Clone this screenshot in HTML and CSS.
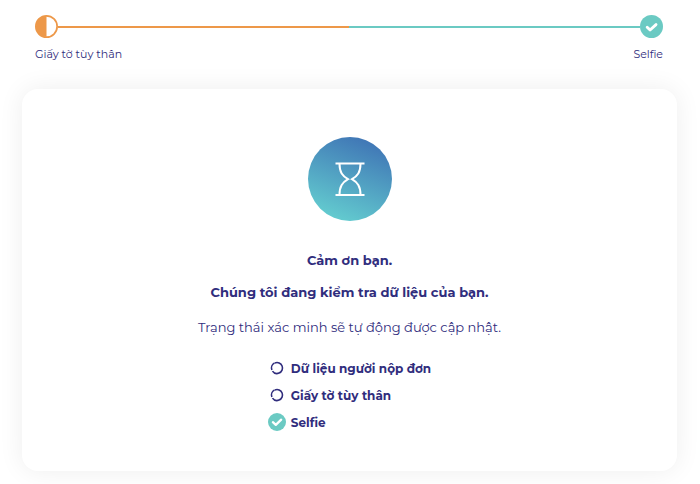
FILE: index.html
```html
<!DOCTYPE html>
<html lang="vi">
<head>
    <meta charset="UTF-8">
    <meta name="viewport" content="width=device-width, initial-scale=1.0">
    <title>Xác minh</title>
    <link rel="stylesheet" href="styles.css">
</head>
<body>

<header>
    <div class="progress">
        <svg class="step-icon" viewBox="0 0 24 24">
            <circle cx="12" cy="12" r="11.1" fill="#fff" stroke="#ed9849" stroke-width="1.8"/>
            <path d="M12 1a11 11 0 0 0 0 22z" fill="#ed9849"/>
        </svg>
        <div class="line"></div>
        <svg class="step-icon" viewBox="0 0 24 24">
            <circle cx="12" cy="12" r="12" fill="#6bcac3"/>
            <path d="M7.500 12.800l3 2.900 6.200-5.700" fill="none" stroke="#fff" stroke-width="3" stroke-linecap="round" stroke-linejoin="round"/>
        </svg>
    </div>
    <div class="labels">
        <span>Giấy tờ tùy thân</span>
        <span>Selfie</span>
    </div>
</header>

<main class="card">
    <svg class="hourglass" viewBox="0 0 84 84">
        <defs>
            <linearGradient id="circle-fill" x1="0.7" y1="0" x2="0.3" y2="1">
                <stop offset="0" stop-color="#3f74b5"/>
                <stop offset="1" stop-color="#64ced0"/>
            </linearGradient>
        </defs>
        <circle cx="42" cy="42" r="42" fill="url(#circle-fill)"/>
        <g fill="none" stroke="#fff" stroke-width="2">
            <path d="M27.500 26.500h29M27.500 58h29"/>
            <path d="M31.500 26.500c0 9 3 12.500 8.500 15.700c-5.500 3.300-8.500 7-8.500 15.800M52.500 26.500c0 9-3 12.500-8.500 15.700c5.500 3.300 8.500 7 8.500 15.800"/>
        </g>
    </svg>
    <h1>Cảm ơn bạn.</h1>
    <h2>Chúng tôi đang kiểm tra dữ liệu của bạn.</h2>
    <p>Trạng thái xác minh sẽ tự động được cập nhật.</p>
    <ul>
        <li>
            <svg viewBox="0 0 18 18">
                <circle cx="9" cy="9" r="5.5" fill="none" stroke="#302d7d" stroke-width="1.600" stroke-dasharray="24 1.300 7.900 1.356" transform="rotate(-112 9 9)"/>
            </svg>
            Dữ liệu người nộp đơn
        </li>
        <li>
            <svg viewBox="0 0 18 18">
                <circle cx="9" cy="9" r="5.5" fill="none" stroke="#302d7d" stroke-width="1.600" stroke-dasharray="24 1.300 7.900 1.356" transform="rotate(-112 9 9)"/>
            </svg>
            Giấy tờ tùy thân
        </li>
        <li>
            <svg viewBox="0 0 24 24">
                <circle cx="12" cy="12" r="12" fill="#6bcac3"/>
                <path d="M6.500 12.200l3.900 3.700 7.200-7" fill="none" stroke="#fff" stroke-width="3" stroke-linecap="round" stroke-linejoin="round"/>
            </svg>
            Selfie
        </li>
    </ul>
</main>

</body>
</html>
```
FILE: styles.css
```css
body {
    margin: 0;
    padding: 15px 23px 13px 22px;
    background-color: #fff;
    color: #302d7d;
    font-family: Montserrat, Inter, sans-serif;
    font-size: 13px;
}
header {
    padding: 0 14px 0 13px;
}
.progress {
    display: flex;
    align-items: center;
}
.step-icon {
    width: 23px;
    height: 23px;
}
.line {
    flex: 1;
    height: 2px;
    background: linear-gradient(to right, #ed9849 50%, #6bcac3 50%);
}
.labels {
    display: flex;
    justify-content: space-between;
    margin-top: 8px;
    font-size: 11px;
    line-height: 16px;
}
.card {
    display: flex;
    flex-direction: column;
    align-items: center;
    margin-top: 27px;
    padding: 48px 20px 40px;
    border-radius: 16px;
    background-color: #fff;
    box-shadow: 0 0 26px rgba(0, 0, 0, 0.07);
}
.hourglass {
    width: 84px;
    height: 84px;
}
h1, h2, p {
    margin: 0;
    font-size: 13px;
    line-height: 20px;
    text-align: center;
}
h1 {
    margin-top: 29px;
}
h2 {
    margin-top: 12px;
}
p {
    margin-top: 15px;
}
ul {
    list-style-type: none;
    margin: 22px 0 0;
    padding: 0;
}
li {
    display: flex;
    align-items: center;
    gap: 5px;
    height: 18px;
    margin-bottom: 9px;
    font-size: 12px;
    font-weight: bold;
}
li:last-child {
    margin-bottom: 0;
}
li svg {
    width: 18px;
    height: 18px;
}
```
